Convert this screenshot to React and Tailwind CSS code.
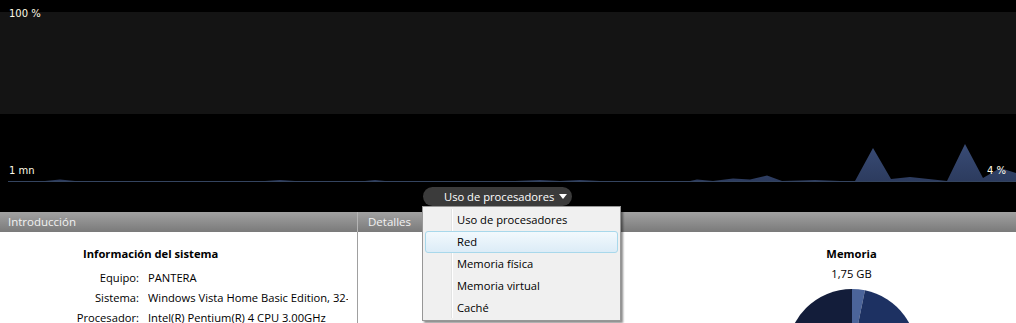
import React from 'react';

// Graph samples (x, y) along the baseline at y=181
const POINTS = [
  [8, 181], [45, 181], [60, 179.5], [75, 181], [265, 181], [280, 180], [295, 181],
  [365, 181], [375, 180], [385, 181], [515, 181], [540, 180], [560, 181],
  [580, 180], [600, 181], [690, 181], [697, 179.5], [713, 181], [733, 178.5],
  [750, 179.5], [767, 175.5], [782, 181], [800, 180.5], [815, 180], [840, 181],
  [855, 181], [873, 148], [891, 179], [910, 177], [947, 181], [965, 144],
  [983, 178], [1000, 168], [1016, 173],
];

const MENU_ITEMS = ['Uso de procesadores', 'Red', 'Memoria física', 'Memoria virtual', 'Caché'];

const INFO_ROWS = [
  { label: 'Equipo:', value: 'PANTERA' },
  { label: 'Sistema:', value: 'Windows Vista Home Basic Edition, 32-bit' },
  { label: 'Procesador:', value: 'Intel(R) Pentium(R) 4 CPU 3.00GHz' },
];

const ResourceGraph = () => {
  const area = `${POINTS.map(([x, y]) => `${x},${y}`).join(' ')} 1016,182 8,182`;
  return (
    <svg className="absolute inset-0" width="1016" height="212" viewBox="0 0 1016 212">
      <defs>
        <linearGradient id="fill" x1="0" y1="140" x2="0" y2="182" gradientUnits="userSpaceOnUse">
          <stop offset="0" stopColor="#3a4d78" />
          <stop offset="1" stopColor="#2c3b5e" />
        </linearGradient>
      </defs>
      <rect x="0" y="12" width="1016" height="102" fill="#141414" />
      <polygon points={area} fill="url(#fill)" />
      <line x1="8" y1="181.5" x2="1016" y2="181.5" stroke="#34445f" strokeWidth="1" />
    </svg>
  );
};

const PieChart = () => {
  const r = 65;
  const cx = 70;
  const cy = 70;
  const pt = (deg) => {
    const a = ((deg - 90) * Math.PI) / 180;
    return `${cx + r * Math.cos(a)},${cy + r * Math.sin(a)}`;
  };
  return (
    <svg width="140" height="140" viewBox="0 0 140 140">
      <path d={`M${cx},${cy} L${pt(0)} A${r},${r} 0 0 1 ${pt(11.5)} Z`} fill="#4b649a" />
      <path d={`M${cx},${cy} L${pt(11.5)} A${r},${r} 0 0 1 ${pt(180)} Z`} fill="#1d3162" />
      <path d={`M${cx},${cy} L${pt(180)} A${r},${r} 0 0 1 ${pt(360)} Z`} fill="#131d3a" />
    </svg>
  );
};

export default function App() {
  return (
    <div className="relative w-[1016px] h-[323px] overflow-hidden bg-white font-['Open_Sans','Noto_Sans',sans-serif] text-[11.2px]">
      {/* graph area */}
      <div className="relative h-[212px] bg-black">
        <ResourceGraph />
        <span className="absolute left-[9px] top-[6px] font-['DejaVu_Sans',sans-serif] text-[10px] text-[#fffbe6]">100 %</span>
        <span className="absolute left-[9px] top-[163px] font-['DejaVu_Sans',sans-serif] text-[10px] text-[#fffbe6]">1 mn</span>
        <span className="absolute left-[987px] top-[163px] font-['DejaVu_Sans',sans-serif] text-[10px] text-[#fffbe6]">4 %</span>
        <div className="relative pt-[187px] pl-[423px]">
          <div className="flex h-[19px] w-[149px] items-center gap-[5px] rounded-full bg-[#3b3b3b] pl-[21px] text-white leading-none">
            <span>Uso de procesadores</span>
            <svg width="8" height="5" viewBox="0 0 8 5">
              <path d="M0 0H8L4 5Z" fill="#fff" />
            </svg>
          </div>
        </div>
      </div>

      {/* section headers */}
      <div className="flex h-[20px] bg-gradient-to-b from-[#a2a2a2] to-[#7a7a7a] text-[#f2f2f2] text-[11.5px]">
        <div className="flex w-[358px] items-center border-r border-[#b5b5b5] pl-[8px]">Introducción</div>
        <div className="flex items-center pl-[10px]">Detalles</div>
      </div>

      {/* panels */}
      <div className="flex h-[91px] text-black">
        <div className="w-[358px] border-r border-[#a0a0a0] pt-[14px]">
          <div className="pl-[83px] font-bold">Información del sistema</div>
          <div className="mt-[6px] flex flex-col gap-[1px]">
            {INFO_ROWS.map(({ label, value }) => (
              <div key={label} className="flex h-[19px] items-center">
                <span className="w-[139px] shrink-0 text-right whitespace-nowrap">{label}</span>
                <span className="ml-[9px] overflow-hidden whitespace-nowrap w-[200px]">{value}</span>
              </div>
            ))}
          </div>
        </div>
        <div className="grid flex-1 grid-cols-2">
          <div />
          <div className="flex flex-col items-center pt-[14px]">
            <div className="font-bold">Memoria</div>
            <div className="mt-[3px]">1,75 GB</div>
            <div className="mt-[1px]">
              <PieChart />
            </div>
          </div>
        </div>
      </div>

      {/* open dropdown menu */}
      <div className="absolute left-[422px] top-[206px] w-[199px] h-[115px] border border-[#979797] bg-[#f0f0f0] p-[2px] shadow-[2px_2px_2px_rgba(0,0,0,0.45)]">
        <div className="absolute left-[28px] top-[2px] bottom-[2px] w-[2px] border-l border-[#e2e3e3] bg-white" />
        {MENU_ITEMS.map((item) => (
          <div
            key={item}
            className={`relative flex h-[22px] items-center pl-[31px] rounded-[3px] ${item === 'Red' ? 'border border-[#a8d8eb] bg-gradient-to-b from-[#f2f9fd] to-[#dcecf7]' : 'border border-transparent'}`}
          >
            {item}
          </div>
        ))}
      </div>
    </div>
  );
}
